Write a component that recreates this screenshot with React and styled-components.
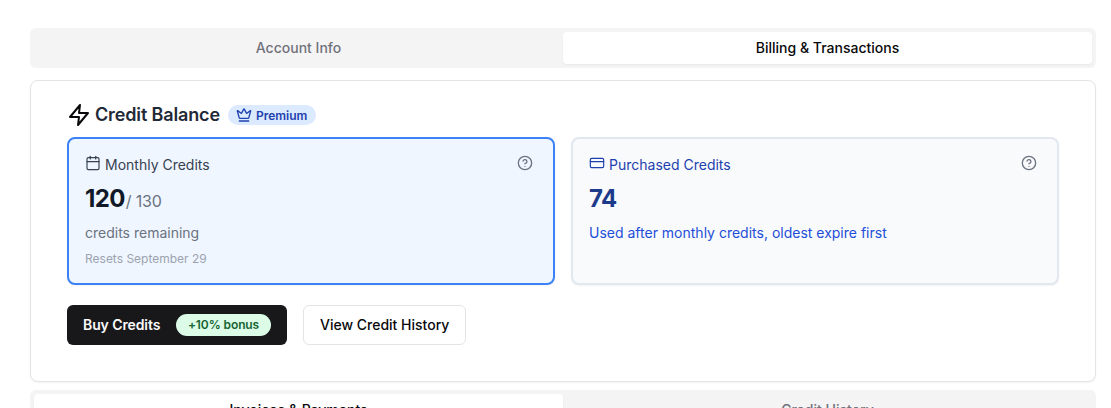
import React from "react";
import styled, { createGlobalStyle } from "styled-components";
import { Crown, Calendar, CreditCard, CircleHelp } from "lucide-react";

const Global = createGlobalStyle`
  html, body { margin: 0; padding: 0; background: #fff; height: 408px; overflow: hidden; }
  body { font-family: Inter, "Liberation Sans", sans-serif; }
  * { box-sizing: border-box; }
`;

const Page = styled.div`
  padding: 28px 15px 0 30px;
  display: flex;
  flex-direction: column;
`;

const TabBar = styled.div`
  display: grid;
  grid-template-columns: 1fr 1fr;
  height: 40px;
  padding: 4px;
  background: #f4f4f5;
  border-radius: 6px;
  flex: none;
`;

const Tab = styled.div`
  display: flex;
  align-items: center;
  justify-content: center;
  font-size: 14px;
  font-weight: 500;
  line-height: 20px;
  border-radius: 4px;
  color: ${(p) => (p.$active ? "#09090b" : "#71717a")};
  background: ${(p) => (p.$active ? "#fff" : "transparent")};
  box-shadow: ${(p) => (p.$active ? "0 1px 2px rgba(0,0,0,.05)" : "none")};
`;

const Panel = styled.section`
  margin-top: 12px;
  height: 302px;
  border: 1px solid #e4e4e7;
  border-radius: 8px;
  background: #fff;
  box-shadow: 0 1px 2px rgba(0,0,0,.05);
  padding: 20px 36px 0;
  flex: none;
`;

const Heading = styled.div`
  display: flex;
  align-items: center;
  height: 28px;
  color: #09090b;
`;

const Title = styled.h2`
  margin: 0 0 0 4px;
  font-size: 18px;
  font-weight: 600;
  line-height: 28px;
  letter-spacing: -0.14px;
  color: #1f2937;
`;

const Badge = styled.span`
  margin-left: 8px;
  display: inline-flex;
  align-items: center;
  gap: 4px;
  width: 88px;
  height: 20px;
  padding: 0 8px;
  border-radius: 10px;
  background: #dbeafe;
  color: #1e40af;
  font-size: 12px;
  font-weight: 600;
`;

const Cards = styled.div`
  margin-top: 8px;
  display: grid;
  grid-template-columns: 488px 488px;
  gap: 16px;
`;

const Card = styled.div`
  height: 148px;
  border-radius: 8px;
  padding: 16px;
  border: 2px solid ${(p) => (p.$highlight ? "#3b82f6" : "#e2e8f0")};
  background: ${(p) => (p.$highlight ? "#eff6ff" : "#f8fafc")};
  box-shadow: 0 1px 2px rgba(0,0,0,.05);
`;

const CardHead = styled.div`
  display: flex;
  align-items: center;
  justify-content: space-between;
  height: 20px;
`;

const CardLabel = styled.div`
  display: flex;
  align-items: center;
  gap: 4px;
  font-size: 14px;
  line-height: 20px;
  color: ${(p) => p.$color};
  & > svg { position: relative; top: -2px; }
`;

const HelpIcon = styled(CircleHelp)`
  color: #6b7280;
  margin-right: 4px;
  position: relative;
  top: -2px;
`;

const Amount = styled.div`
  margin-top: 8px;
  display: flex;
  align-items: baseline;
  line-height: 32px;
  height: 32px;
`;

const Big = styled.span`
  font-size: 24px;
  font-weight: 700;
  letter-spacing: -0.6px;
  color: ${(p) => p.$color};
`;

const Of = styled.span`
  margin-left: 1px;
  font-size: 16px;
  letter-spacing: -0.2px;
  color: #6b7280;
`;

const Note = styled.div`
  margin-top: 8px;
  font-size: 14px;
  line-height: 20px;
  color: ${(p) => p.$color};
`;

const Resets = styled.div`
  margin-top: 8px;
  font-size: 12px;
  line-height: 16px;
  color: #9ca3af;
`;

const Actions = styled.div`
  margin-top: 20px;
  display: flex;
  gap: 16px;
`;

const Primary = styled.button`
  display: flex;
  align-items: center;
  justify-content: space-between;
  width: 220px;
  height: 40px;
  padding: 0 16px;
  border: none;
  border-radius: 6px;
  background: #18181b;
  color: #fafafa;
  font: 600 14px/20px Inter, sans-serif;
  letter-spacing: -0.1px;
`;

const Bonus = styled.span`
  display: inline-flex;
  align-items: center;
  justify-content: center;
  width: 95px;
  height: 22px;
  border-radius: 11px;
  background: #dcfce7;
  color: #166534;
  font-size: 12px;
  font-weight: 600;
  letter-spacing: -0.1px;
`;

const Secondary = styled.button`
  height: 40px;
  padding: 0 16px;
  border: 1px solid #e4e4e7;
  border-radius: 6px;
  background: #fff;
  color: #09090b;
  font: 500 14px/20px Inter, sans-serif;
`;

const LowerTabs = styled(TabBar)`
  margin-top: 8px;
`;

const BoltIcon = () => (
  <svg width="24" height="24" viewBox="0 0 24 24" fill="none" stroke="currentColor" strokeWidth="2" strokeLinecap="round" strokeLinejoin="round">
    <polygon points="13 2 3 14 12 14 11 22 21 10 12 10 13 2" />
  </svg>
);

export default function App() {
  return (
    <Page>
      <Global />
      <TabBar>
        <Tab>Account Info</Tab>
        <Tab $active>Billing &amp; Transactions</Tab>
      </TabBar>
      <Panel>
        <Heading>
          <BoltIcon />
          <Title>Credit Balance</Title>
          <Badge>
            <Crown size={16} strokeWidth={2} />
            Premium
          </Badge>
        </Heading>
        <Cards>
          <Card $highlight>
            <CardHead>
              <CardLabel $color="#374151">
                <Calendar size={16} strokeWidth={1.75} />
                Monthly Credits
              </CardLabel>
              <HelpIcon size={16} />
            </CardHead>
            <Amount>
              <Big $color="#111827">120</Big>
              <Of>/ 130</Of>
            </Amount>
            <Note $color="#6b7280">credits remaining</Note>
            <Resets>Resets September 29</Resets>
          </Card>
          <Card>
            <CardHead>
              <CardLabel $color="#1e40af">
                <CreditCard size={16} strokeWidth={1.75} />
                Purchased Credits
              </CardLabel>
              <HelpIcon size={16} />
            </CardHead>
            <Amount>
              <Big $color="#1e3a8a">74</Big>
            </Amount>
            <Note $color="#1d4ed8">Used after monthly credits, oldest expire first</Note>
          </Card>
        </Cards>
        <Actions>
          <Primary>
            Buy Credits
            <Bonus>+10% bonus</Bonus>
          </Primary>
          <Secondary>View Credit History</Secondary>
        </Actions>
      </Panel>
      <LowerTabs>
        <Tab $active>Invoices &amp; Payments</Tab>
        <Tab>Credit History</Tab>
      </LowerTabs>
    </Page>
  );
}
